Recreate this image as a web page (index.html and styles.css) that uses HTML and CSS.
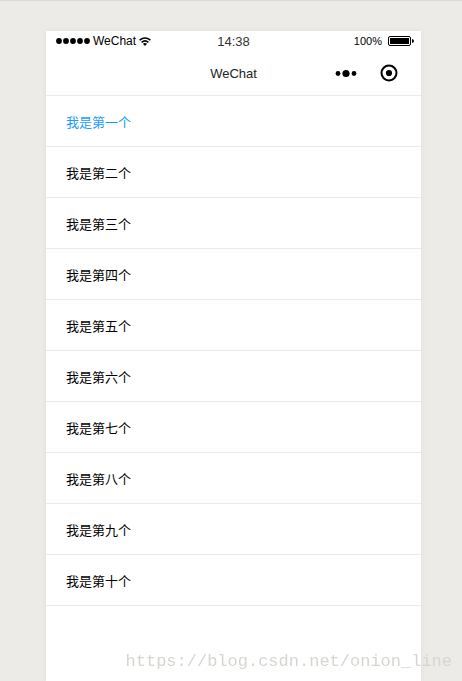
FILE: index.html
```html
<!DOCTYPE html>
<html lang="zh-CN">
<head>
  <meta charset="UTF-8" />
  <meta name="viewport" content="width=device-width, initial-scale=1" />
  <title>WeChat</title>
  <link rel="stylesheet" href="styles.css">
</head>
<body>

  <div class="phone">

    <!-- status bar -->
    <div class="status-bar">
      <div class="carrier">
        <svg width="34" height="6" viewBox="0 0 34 6">
          <circle cx="3" cy="3" r="2.9" />
          <circle cx="10" cy="3" r="2.9" />
          <circle cx="17" cy="3" r="2.9" />
          <circle cx="24" cy="3" r="2.9" />
          <circle cx="31" cy="3" r="2.9" />
        </svg>
        <span>WeChat</span>
        <svg width="12" height="9" viewBox="0 0 12 9">
          <path d="M0.6 3.1 Q6 -1.3 11.4 3.1 M2.6 5.3 Q6 2.5 9.4 5.3" fill="none" stroke="#000" stroke-width="1.5" />
          <path d="M3.9 6.8 Q6 5.2 8.1 6.8 L6 9 Z" />
        </svg>
      </div>
      <div class="clock">14:38</div>
      <div class="battery">
        <span>100%</span>
        <svg width="26" height="10" viewBox="0 0 26 10">
          <rect x="0.5" y="0.5" width="22" height="9" rx="1.5" fill="none" stroke="#000" />
          <rect x="2" y="2" width="19" height="6" />
          <path d="M24 3 Q26 3.4 26 5 Q26 6.6 24 7 Z" />
        </svg>
      </div>
    </div>

    <!-- navigation bar -->
    <div class="nav-bar">
      <h1>WeChat</h1>
      <div class="nav-actions">
        <button type="button" aria-label="More">
          <svg width="22" height="18" viewBox="0 0 22 18">
            <circle cx="3" cy="9.5" r="2.4" />
            <circle cx="11" cy="9.5" r="3.6" />
            <circle cx="19" cy="9.5" r="2.4" />
          </svg>
        </button>
        <button type="button" aria-label="Close">
          <svg width="18" height="18" viewBox="0 0 18 18">
            <circle cx="9" cy="9" r="7.5" fill="none" stroke="#000" stroke-width="2" />
            <circle cx="9" cy="9" r="3.1" />
          </svg>
        </button>
      </div>
    </div>

    <ul class="list">
      <li class="active">我是第一个</li>
      <li>我是第二个</li>
      <li>我是第三个</li>
      <li>我是第四个</li>
      <li>我是第五个</li>
      <li>我是第六个</li>
      <li>我是第七个</li>
      <li>我是第八个</li>
      <li>我是第九个</li>
      <li>我是第十个</li>
    </ul>
  </div>

  <div class="watermark">https://blog.csdn.net/onion_line</div>

</body>
</html>
```

FILE: styles.css
```css
* {
  margin: 0;
  padding: 0;
  box-sizing: border-box;
}

body {
  display: flex;
  min-height: 100vh;
  padding: 30px 41px 0 46px;
  border-top: 1px solid #dadada;
  background-color: #ecebe7;
  color: #000;
  font-family: "Liberation Sans", "Noto Sans CJK SC", sans-serif;
  font-size: 13px;
}

svg {
  display: block;
}

.phone {
  flex: 1;
  background-color: #fff;
  box-shadow: 0 0 6px rgba(0, 0, 0, 0.06);
}

/* status bar */
.status-bar {
  display: grid;
  grid-template-columns: 1fr auto 1fr;
  align-items: center;
  height: 20px;
  padding: 0 7px;
}

.carrier,
.battery {
  display: flex;
  align-items: center;
  gap: 3px;
  font-size: 12px;
}

.carrier {
  padding-left: 3px;
}

.battery {
  justify-content: flex-end;
  gap: 6px;
  font-size: 11px;
}

.clock {
  color: #333;
}

/* navigation bar */
.nav-bar {
  display: grid;
  grid-template-columns: 1fr auto 1fr;
  align-items: center;
  height: 45px;
  padding: 0 23px;
  border-bottom: 1px solid #ebebeb;
}

.nav-bar h1 {
  grid-column: 2;
  color: #222;
  font-size: 13px;
  font-weight: normal;
}

.nav-actions {
  display: flex;
  justify-content: flex-end;
  gap: 23px;
}

.nav-actions button {
  border: none;
  background: none;
  cursor: pointer;
}

/* list */
.list {
  list-style: none;
}

.list li {
  height: 51px;
  padding: 0 20px;
  border-bottom: 1px solid #ebebeb;
  line-height: 54px;
}

.list .active {
  color: #1a9cff;
}

.watermark {
  position: fixed;
  right: 10px;
  bottom: 10px;
  color: #d6d6d1;
  font-family: "Liberation Mono", monospace;
  font-size: 17px;
}
```
